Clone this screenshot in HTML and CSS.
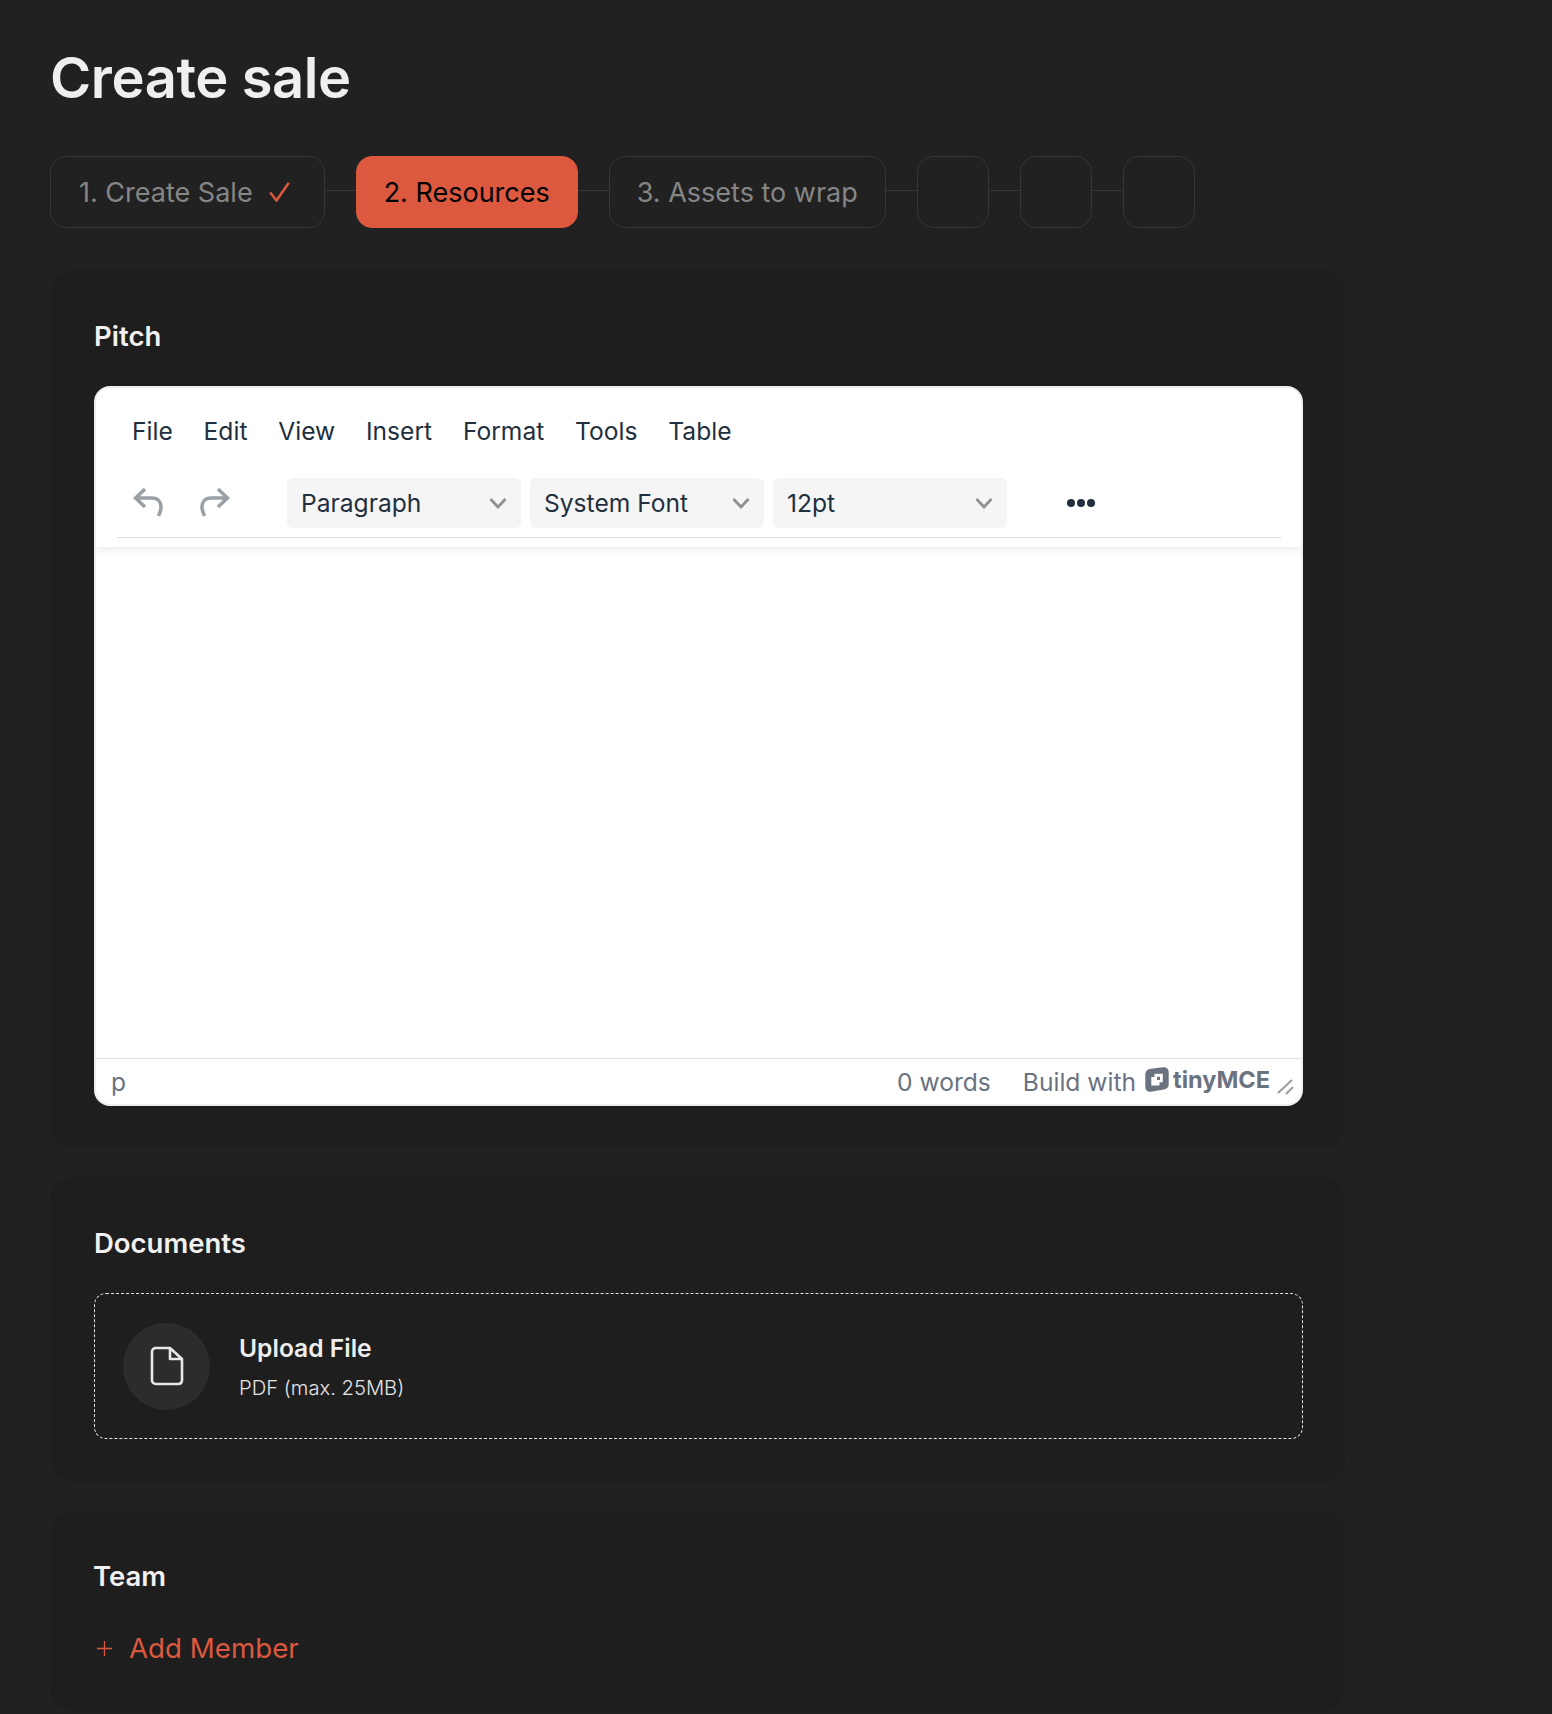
FILE: index.html
```html
<!DOCTYPE html>
<html lang="en">
<head>
<meta charset="utf-8">
<title>Create sale</title>
<link rel="stylesheet" href="styles.css">
</head>
<body>
<main class="page">
  <h1 class="title">Create sale</h1>
  <ol class="steps">
    <li class="step step-done"><span>1. Create Sale</span>
      <svg class="check" width="21" height="20" viewBox="0 0 21 20"><path d="M1.200 10.500 L7.500 18.500 L19.800 0.800" fill="none" stroke="#dc5940" stroke-width="2.500"/></svg>
    </li>
    <li class="link"></li>
    <li class="step step-active">2. Resources</li>
    <li class="link"></li>
    <li class="step">3. Assets to wrap</li>
    <li class="link"></li>
    <li class="step step-empty"></li>
    <li class="link"></li>
    <li class="step step-empty"></li>
    <li class="link"></li>
    <li class="step step-empty"></li>
  </ol>

  <section class="card">
    <h2 class="card-title">Pitch</h2>
    <div class="editor">
      <div class="editor-header">
        <nav class="menubar">
          <span>File</span><span>Edit</span><span>View</span><span>Insert</span><span>Format</span><span>Tools</span><span>Table</span>
        </nav>
        <div class="toolbar">
          <svg class="tool-icon" width="30" height="30" viewBox="0 0 30 30"><path d="M12 2 L2.500 11 L12 20 M3 11 H19 C25 11 28 15 28 20 C28 24 27 26 25.500 29" fill="none" stroke="#9aa0a6" stroke-width="3.600"/></svg>
          <svg class="tool-icon" width="30" height="30" viewBox="0 0 30 30"><path d="M18 2 L27.500 11 L18 20 M27 11 H11 C5 11 2 15 2 20 C2 24 3 26 4.500 29" fill="none" stroke="#9aa0a6" stroke-width="3.600"/></svg>
          <div class="selects">
            <div class="select"><span>Paragraph</span><svg width="18" height="12" viewBox="0 0 18 12"><path d="M1.500 2 L9 10 L16.500 2" fill="none" stroke="#8e9297" stroke-width="2.800"/></svg></div>
            <div class="select"><span>System Font</span><svg width="18" height="12" viewBox="0 0 18 12"><path d="M1.500 2 L9 10 L16.500 2" fill="none" stroke="#8e9297" stroke-width="2.800"/></svg></div>
            <div class="select"><span>12pt</span><svg width="18" height="12" viewBox="0 0 18 12"><path d="M1.500 2 L9 10 L16.500 2" fill="none" stroke="#8e9297" stroke-width="2.800"/></svg></div>
          </div>
          <div class="more"><i></i><i></i><i></i></div>
        </div>
      </div>
      <div class="editor-body"></div>
      <footer class="statusbar">
        <span class="path">p</span>
        <span class="words">0 words</span>
        <span class="brand">Build with</span>
        <svg class="tiny-logo" width="24" height="25" viewBox="0 0 24 25"><path fill-rule="evenodd" fill="#6b7280" d="M6 1.800 L18 0.300 C21.500 0 23.700 2 23.700 5 L23.700 17 C23.700 20 22.500 21.500 19 22.500 L6 24.800 C2.500 25.200 0.300 23 0.300 20 L0.300 7 C0.300 4 2.500 2.300 6 1.800 Z M9.500 6.800 L9.500 10 L6.300 10 L6.300 18.500 L14.500 18.500 L14.500 15.300 L17.800 15.300 L17.800 6.800 Z M12 9.800 L15 9.800 L15 13 L12 13 Z"/></svg>
        <span class="tiny-name">tinyMCE</span>
        <svg class="resize" width="18" height="18" viewBox="0 0 18 18"><path d="M1 15 L15 2 M9 16 L16 9" fill="none" stroke="#9aa0a6" stroke-width="2.200"/></svg>
      </footer>
    </div>
  </section>

  <section class="card card-docs">
    <h2 class="card-title">Documents</h2>
    <div class="dropzone">
      <div class="file-circle">
        <svg width="34" height="40" viewBox="0 0 34 40"><path d="M6 2 H20 L32 13 V34 C32 36.500 30.500 38 28 38 H6 C3.500 38 2 36.500 2 34 V6 C2 3.500 3.500 2 6 2 Z M20 2 V13 H32" fill="none" stroke="#e8e8e8" stroke-width="2.600" stroke-linejoin="round"/></svg>
      </div>
      <div class="upload-text">
        <div class="upload-title">Upload File</div>
        <div class="upload-hint">PDF (max. 25MB)</div>
      </div>
    </div>
  </section>

  <section class="card card-team">
    <h2 class="card-title">Team</h2>
    <div class="add-member">
      <svg width="15" height="15" viewBox="0 0 15 15"><path d="M7.500 0 V15 M0 7.500 H15" stroke="#dc5940" stroke-width="1.300"/></svg>
      <span>Add Member</span>
    </div>
  </section>
</main>
</body>
</html>
```
FILE: styles.css
```css
* { box-sizing: border-box; }
html, body { margin: 0; padding: 0; }
body {
  background: #212121;
  font-family: Inter, "Liberation Sans", sans-serif;
  color: #eceded;
  height: 1714px;
  overflow: hidden;
}
.page { width: 1345px; padding: 48px 0 0 50px; }
.title {
  margin: 0 0 48px;
  font-size: 56px;
  line-height: 60px;
  font-weight: 600;
  letter-spacing: -0.4px;
  color: #eeeff1;
}
.steps {
  list-style: none;
  margin: 0 0 42px;
  padding: 0;
  display: flex;
  align-items: center;
  height: 72px;
}
.step {
  height: 72px;
  padding: 0 27px;
  border: 1px solid #363636;
  border-radius: 16px;
  display: flex;
  align-items: center;
  gap: 16px;
  font-size: 27px;
  color: #868686;
  white-space: nowrap;
}
.step-done { padding: 0 34px 0 28px; }
.step-active { background: #dc5940; border-color: #dc5940; color: #000; }
.step-empty { width: 72px; padding: 0; }
.link { width: 31px; height: 1px; background: #363636; margin-top: -4px; }
.check { flex: none; }

.card {
  background: #1e1e1e;
  border-radius: 24px;
  padding: 48px 42px 42px 44px;
  margin-bottom: 29px;
}
.card-docs { padding-bottom: 43px; }
.card-team { padding-top: 47px; }
.card-title {
  margin: 0 0 32px;
  font-size: 27.500px;
  line-height: 36px;
  font-weight: 600;
  color: #f1f1f1;
}
.card-team .card-title { margin: 0 0 33px -1px; }

.editor {
  height: 720px;
  background: #fff;
  border: 2px solid #eeeeee;
  border-radius: 16px;
  display: flex;
  flex-direction: column;
  overflow: hidden;
  color: #222f3e;
}
.editor-header {
  height: 159px;
  padding: 0 20px 0 21px;
  box-shadow: 0 4px 8px rgba(0, 0, 0, .07);
  flex: none;
  position: relative;
}
.menubar {
  height: 90px;
  padding: 0 0 4px 15px;
  display: flex;
  align-items: center;
  font-size: 24.600px;
  gap: 30.800px;
}
.toolbar {
  height: 60px;
  padding: 0 0 9px 16px;
  border-bottom: 1px solid #e0e0e0;
  display: flex;
  align-items: center;
  gap: 37px;
}
.tool-icon { margin-top: -3px; }
.selects { display: flex; gap: 9px; margin-left: 20px; }
.select {
  width: 234px;
  height: 50px;
  padding: 0 14px;
  background: #f5f5f5;
  border-radius: 6px;
  display: flex;
  align-items: center;
  justify-content: space-between;
  font-size: 24.600px;
}
.more { display: flex; gap: 2px; margin: -1px 0 0 23px; }
.more i { width: 8px; height: 8px; border-radius: 50%; background: #222f3e; }
.editor-body { flex: 1; }
.statusbar {
  height: 46px;
  padding: 0 6px 0 15px;
  border-top: 1px solid #e0e0e0;
  display: flex;
  align-items: center;
  font-size: 24.600px;
  color: #6b7280;
}
.path { margin-right: auto; }
.words { margin-right: 32px; }
.brand { margin-right: 9px; }
.tiny-logo { margin-right: 4px; margin-top: -4px; }
.tiny-name { font-weight: 700; font-size: 23.500px; margin-top: -4px; margin-right: 7px; }
.resize { margin-top: 10px; }

.dropzone {
  height: 146px;
  border: 1px dashed #e4e4e4;
  border-radius: 12px;
  display: flex;
  align-items: center;
  padding-left: 28px;
  gap: 29px;
}
.file-circle {
  width: 87px;
  height: 87px;
  border-radius: 50%;
  background: #2c2c2c;
  display: flex;
  align-items: center;
  justify-content: center;
}
.upload-title { font-size: 24.600px; font-weight: 600; line-height: 36px; margin: 4px 0 4px; color: #ededed; }
.upload-hint { font-size: 20.200px; font-weight: 300; line-height: 36px; color: #e4e4e4; }

.add-member {
  height: 42px;
  margin-top: 1px;
  padding-left: 3px;
  display: flex;
  align-items: center;
  gap: 17px;
  font-size: 27.700px;
  color: #dc5940;
}
```
